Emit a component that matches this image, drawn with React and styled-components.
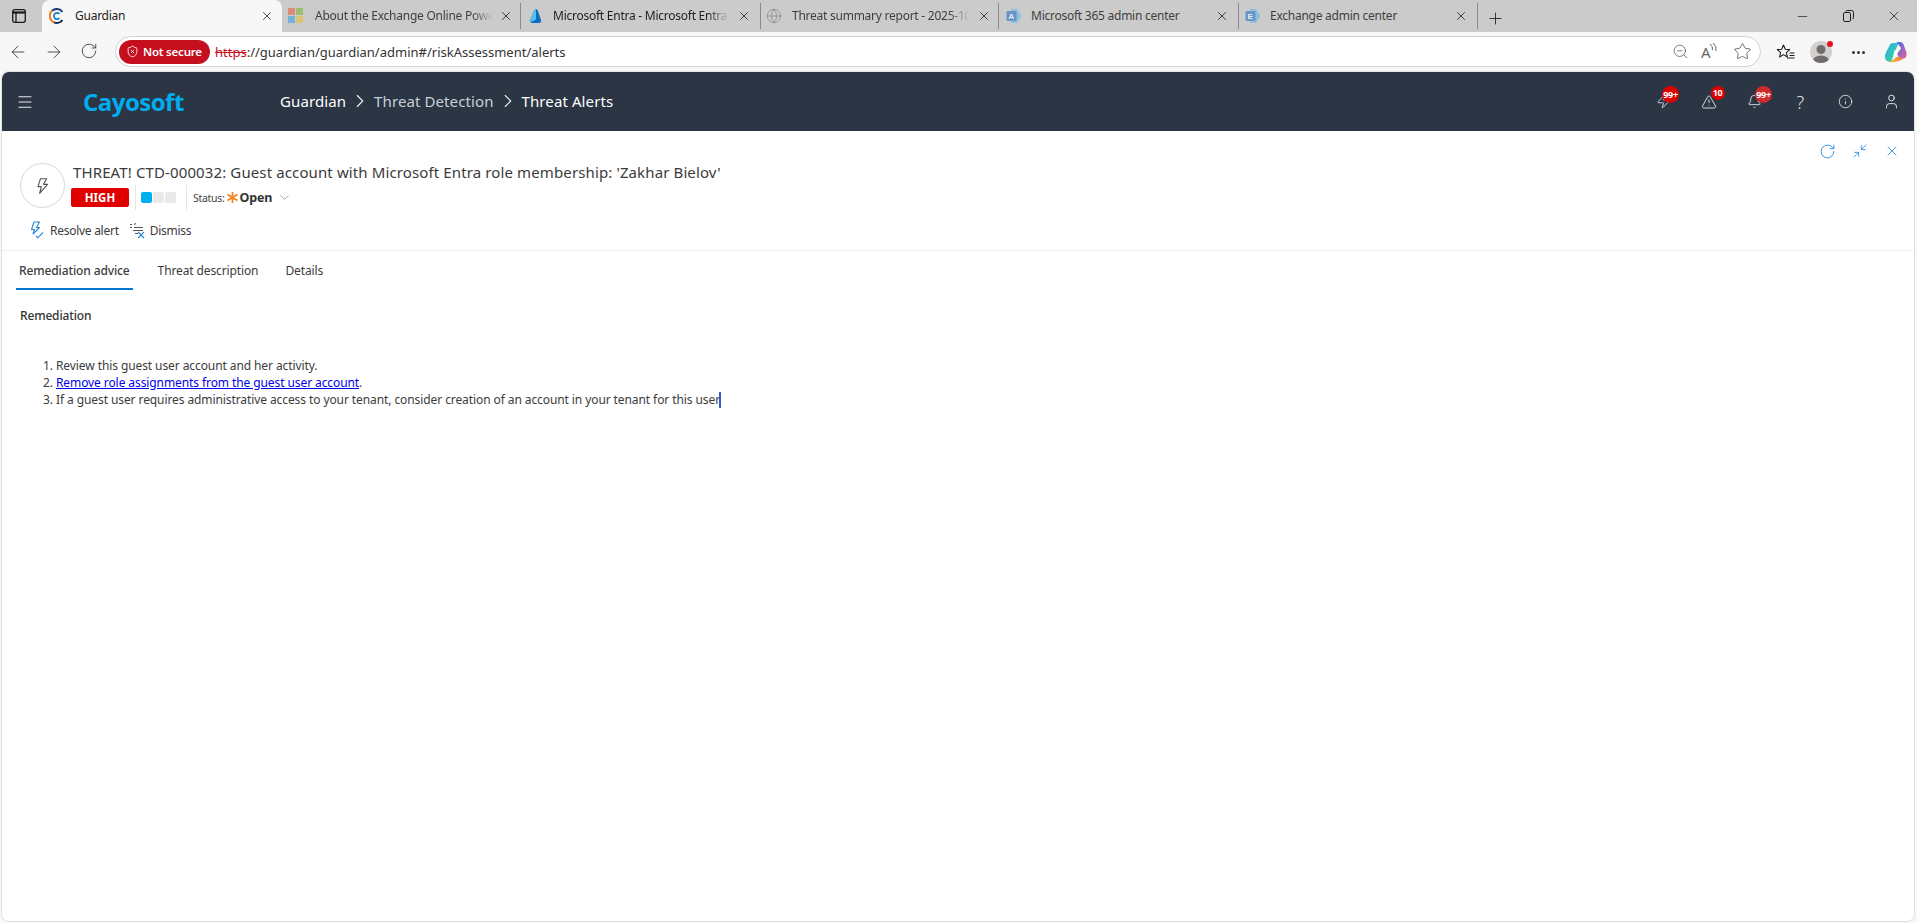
import React from "react";
import styled, { createGlobalStyle } from "styled-components";
import { ArrowLeft, ArrowRight, RotateCw, ZoomOut, Star, Menu, ChevronRight, ChevronDown, Zap, TriangleAlert, Bell, Info, User, X, Plus, Minus, ShieldX, Minimize2, Globe } from "lucide-react";

const UI = `"Noto Sans", "Open Sans", "Liberation Sans", sans-serif`;

const Global = createGlobalStyle`
  html, body { margin: 0; padding: 0; height: 100%; background: #f7f7f7; overflow: hidden; }
  body { font-family: ${UI}; }
  * { box-sizing: border-box; }
`;

const Page = styled.div`
  width: 1917px;
  height: 923px;
  display: flex;
  flex-direction: column;
  background: #f7f7f7;
`;

/* ---------- tab strip ---------- */
const TabStrip = styled.div`
  height: 32px;
  background: #cbcbcb;
  display: flex;
  align-items: flex-end;
  flex: none;
`;
const SideButton = styled.div`
  width: 42px;
  height: 32px;
  display: flex;
  align-items: center;
  justify-content: center;
  padding-right: 5px;
`;
const Tab = styled.div`
  width: ${p => p.$w}px;
  height: ${p => (p.$active ? 32 : 26)}px;
  margin-bottom: ${p => (p.$active ? 0 : 3)}px;
  padding-left: ${p => p.$pad}px;
  background: ${p => (p.$active ? "#f7f7f7" : "transparent")};
  border-radius: ${p => (p.$active ? "8px 8px 0 0" : "0")};
  border-right: ${p => (p.$active ? "none" : "1px solid #8a8a8a")};
  display: flex;
  align-items: center;
  flex: none;
`;
const TabIcon = styled.span`
  width: 16px;
  height: 16px;
  flex: none;
  display: flex;
  opacity: ${p => (p.$dim ? 0.7 : 1)};
`;
const TabTitle = styled.span`
  margin-left: ${p => p.$gap}px;
  width: ${p => p.$w}px;
  font-size: 12px;
  letter-spacing: -0.25px;
  line-height: 16px;
  color: ${p => (p.$dark ? "#1e1e1e" : "#3f3f3f")};
  white-space: nowrap;
  overflow: hidden;
  flex: none;
  ${p => p.$fade && `-webkit-mask-image: linear-gradient(90deg,#000 88%,transparent);`}
`;
const TabClose = styled.span`
  margin-left: ${p => p.$gap}px;
  display: flex;
  color: #111;
`;
const NewTab = styled.div`
  margin: 0 0 4px 8px;
  display: flex;
  color: #222;
`;
const WindowButtons = styled.div`
  margin-left: auto;
  height: 32px;
  display: flex;
  align-items: center;
  color: #1c1c1c;
`;
const WindowButton = styled.span`
  width: 46px;
  display: flex;
  justify-content: center;
`;

/* ---------- toolbar ---------- */
const Toolbar = styled.div`
  height: 40px;
  flex: none;
  display: flex;
  align-items: center;
  background: #f7f7f7;
  padding-left: 8px;
  color: #444;
`;
const NavIcons = styled.div`
  display: flex;
  gap: 16px;
  margin-right: 17px;
  color: #3f3f3f;
`;
const Omnibox = styled.div`
  width: 1646px;
  height: 31px;
  margin-top: -1px;
  border: 1px solid #d2d2d2;
  border-radius: 16px;
  background: #fff;
  display: flex;
  align-items: center;
  padding: 0 8px 0 3px;
`;
const NotSecure = styled.div`
  width: 91px;
  height: 24px;
  border-radius: 12px;
  background: #c50f1f;
  color: #fff;
  font-size: 11.5px;
  font-weight: 600;
  letter-spacing: -0.2px;
  display: flex;
  align-items: center;
  gap: 4px;
  padding-left: 7px;
  white-space: nowrap;
`;
const Url = styled.div`
  margin-left: 5px;
  font-size: 13px;
  color: #333;
  white-space: nowrap;
`;
const Https = styled.span`
  color: #c50f1f;
  text-decoration: line-through;
`;
const OmniIcons = styled.div`
  margin-left: auto;
  display: flex;
  align-items: center;
  gap: 12px;
  color: #5c5c5c;
`;
const ReadAloud = styled.span`
  width: 20px;
  height: 18px;
  display: flex;
  align-items: flex-end;
  font-size: 15px;
  line-height: 17px;
  color: #666;
`;
const ToolIcons = styled.div`
  display: flex;
  align-items: center;
  margin-left: 15px;
  gap: 15px;
  color: #333;
`;
const Avatar = styled.div`
  position: relative;
  width: 22px;
  height: 22px;
  border-radius: 50%;
  background: #d2d0ce;
  display: flex;
  align-items: flex-end;
  justify-content: center;
`;
const AvatarDot = styled.span`
  position: absolute;
  top: 0;
  right: -1px;
  width: 6px;
  height: 6px;
  border-radius: 50%;
  background: #e81123;
`;
const Dots = styled.span`
  width: 22px;
  display: flex;
  justify-content: center;
  gap: 2px;
`;
const Dot = styled.span`
  width: 3px;
  height: 3px;
  border-radius: 50%;
  background: #333;
`;

/* ---------- app frame ---------- */
const Frame = styled.div`
  flex: 1;
  margin: 0 3px 2px 2px;
  background: #fff;
  border-radius: 7px;
  box-shadow: 0 0 0 1px #e2e2e2;
  display: flex;
  flex-direction: column;
  overflow: hidden;
`;
const Header = styled.header`
  height: 59px;
  flex: none;
  background: #2b3544;
  display: flex;
  align-items: center;
  color: #fff;
  padding-left: 14px;
`;
const Burger = styled.div`
  width: 18px;
  display: flex;
  color: #fff;
`;
const Logo = styled.div`
  margin-left: 49px;
  width: 197px;
  font-family: "Open Sans", sans-serif;
  font-size: 24px;
  font-weight: 700;
  letter-spacing: -0.5px;
  color: #00aeef;
`;
const Crumbs = styled.nav`
  display: flex;
  align-items: center;
  margin-top: -1px;
  font-size: 15px;
  letter-spacing: 0.1px;
`;
const Crumb = styled.span`
  color: ${p => (p.$dim ? "#c9d0d9" : "#fff")};
`;
const CrumbSep = styled.span`
  display: flex;
  width: 28px;
  justify-content: center;
  color: #f0f0f0;
`;
const HeaderIcons = styled.div`
  margin-left: auto;
  display: flex;
  align-items: center;
`;
const HeaderIcon = styled.div`
  position: relative;
  width: 45.5px;
  display: flex;
  justify-content: center;
  color: #eef3f8;
`;
const Question = styled.span`
  font-family: "Open Sans", sans-serif;
  font-size: 18px;
  line-height: 18px;
  font-weight: 300;
  color: #eef3f8;
`;
const Badge = styled.span`
  position: absolute;
  top: -8px;
  left: ${p => p.$left}px;
  width: ${p => p.$size}px;
  height: ${p => p.$size}px;
  border-radius: 50%;
  background: ${p => p.$bg || "#dc0000"};
  color: #fff;
  font-size: 9px;
  font-weight: 700;
  letter-spacing: -0.3px;
  display: flex;
  align-items: center;
  justify-content: center;
  white-space: nowrap;
`;

/* ---------- alert panel ---------- */
const Panel = styled.main`
  flex: 1;
  display: flex;
  flex-direction: column;
  position: relative;
`;
const PanelTools = styled.div`
  position: absolute;
  top: 12px;
  right: 14px;
  display: flex;
  gap: 16px;
  color: #2f8fdf;
`;
const AlertHead = styled.section`
  display: flex;
  padding: 32px 0 0 18px;
  gap: 8px;
  height: 89px;
  flex: none;
`;
const Round = styled.div`
  width: 45px;
  height: 45px;
  border: 1px solid #d8d8d8;
  border-radius: 50%;
  display: flex;
  align-items: center;
  justify-content: center;
  color: #555;
  flex: none;
`;
const HeadText = styled.div`
  display: flex;
  flex-direction: column;
`;
const Title = styled.h1`
  margin: -1px 0 0;
  font-size: 15px;
  line-height: 20px;
  font-weight: 400;
  letter-spacing: 0.12px;
  color: #3b3b3b;
  white-space: nowrap;
`;
const MetaRow = styled.div`
  display: flex;
  align-items: center;
  height: 25px;
  margin: 3px 0 0 -2px;
`;
const Severity = styled.span`
  width: 58px;
  height: 19px;
  background: #e00000;
  color: #fff;
  border-radius: 2px;
  font-size: 11.5px;
  font-weight: 700;
  display: flex;
  align-items: center;
  justify-content: center;
`;
const MetaDivider = styled.span`
  width: 1px;
  height: 25px;
  background: #e6e6e6;
  margin: 0 ${p => p.$r}px 0 ${p => p.$l}px;
`;
const Levels = styled.div`
  display: flex;
  gap: 1px;
`;
const Level = styled.span`
  width: 11px;
  height: 11px;
  border-radius: 2px;
  background: ${p => (p.$on ? "#00aff0" : "#e9e9e9")};
`;
const StatusLabel = styled.span`
  font-size: 10.5px;
  letter-spacing: -0.3px;
  margin-left: 1px;
  color: #444;
`;
const StatusValue = styled.span`
  font-size: 12.5px;
  font-weight: 700;
  letter-spacing: -0.15px;
  color: #333;
`;
const StatusIcon = styled.span`
  display: flex;
  margin-left: 2px;
  color: #f58220;
`;
const StatusChevron = styled.span`
  display: flex;
  margin-left: 5px;
  color: #777;
`;
const Actions = styled.div`
  height: 31px;
  flex: none;
  display: flex;
  align-items: flex-start;
  padding: 1px 0 0 27px;
  border-bottom: 1px solid #eeeeee;
`;
const Action = styled.button`
  display: flex;
  align-items: center;
  border: 0;
  background: none;
  padding: 0;
  height: 18px;
  margin-right: ${p => p.$mr}px;
  font: 400 12px ${UI};
  letter-spacing: -0.27px;
  color: #3c3c3c;
  gap: ${p => p.$gap}px;
`;
const TabsRow = styled.div`
  height: 39px;
  flex: none;
  display: flex;
  padding-left: 14px;
  gap: 27px;
`;
const PageTab = styled.div`
  padding: 0 ${p => (p.$active ? 3 : 0)}px;
  margin-right: ${p => (p.$active ? -2 : 0)}px;
  height: 39px;
  border-bottom: 2px solid ${p => (p.$active ? "#0078d4" : "transparent")};
  font-size: 12px;
  line-height: 40px;
  letter-spacing: -0.12px;
  font-weight: ${p => (p.$active ? 500 : 400)};
  color: #3c3c3c;
`;
const Body = styled.div`
  padding: 17px 0 0 18px;
  font-size: 12px;
  letter-spacing: -0.09px;
  color: #3c3c3c;
`;
const SectionTitle = styled.h2`
  margin: 0 0 32px;
  font-size: 12px;
  line-height: 18px;
  letter-spacing: -0.15px;
  font-weight: 500;
  color: #333;
`;
const Steps = styled.ol`
  margin: 0;
  padding-left: 36px;
  line-height: 17px;
`;
const StepLink = styled.a`
  color: #0000ee;
  text-decoration: underline;
`;
const Caret = styled.span`
  position: relative;
  display: inline-block;
  width: 0;
`;
const CaretBar = styled.span`
  position: absolute;
  left: -1px;
  top: -12px;
  width: 2px;
  height: 16px;
  background: #2a5fd0;
`;

/* ---------- drawings ---------- */
const Bolt = ({ s = 16 }) => (
  <svg width={s} height={s} viewBox="0 0 16 16" fill="none" stroke="currentColor" strokeWidth="1">
    <path d="M9.5 1.5H5.8L3.5 8.5h3L5 14.5l7-8H8.5l2.7-5z" strokeLinejoin="round" />
  </svg>
);
const ResolveIcon = () => (
  <svg width="16" height="18" viewBox="0 0 16 18" fill="none" stroke="#2b88d8" strokeWidth="1.1" style={{ flex: "none" }}>
    <path d="M8.5 1H5L2.5 8.5h3L4 13l6.5-6.5H7.5L10.5 1z" strokeLinejoin="round" />
    <path d="M7 15l1.8 1.8L14 11.5" />
  </svg>
);
const DismissIcon = () => (
  <svg width="17" height="18" viewBox="0 0 17 18" fill="none" strokeWidth="1.1" style={{ flex: "none" }}>
    <path d="M1 3.5h2M5 3.5l2-1M1 6.5h2M5 6.5h9M4 9.5h10M6 12.5h3" stroke="#555" />
    <path d="M9 11l6 6M15 11l-6 6" stroke="#2b88d8" />
  </svg>
);
const CayoFavicon = () => (
  <svg width="16" height="16" viewBox="0 0 16 16" fill="none">
    <path d="M13.5 4A7 7 0 0 0 3 2.8" stroke="#1c3f7c" strokeWidth="2" />
    <path d="M3 2.8A7 7 0 0 0 5 14.3" stroke="#f07f22" strokeWidth="2" />
    <path d="M5 14.3A7 7 0 0 0 13.5 12" stroke="#12294f" strokeWidth="2" />
    <path d="M10.5 5.8A3.2 3.2 0 1 0 10.5 10.2" stroke="#1784c7" strokeWidth="1.8" />
  </svg>
);
const MsFavicon = () => (
  <svg width="15" height="15" viewBox="0 0 15 15">
    <rect width="7" height="7" fill="#e8705a" />
    <rect x="8" width="7" height="7" fill="#8ab84a" />
    <rect y="8" width="7" height="7" fill="#4ea8e0" />
    <rect x="8" y="8" width="7" height="7" fill="#e8c24a" />
  </svg>
);
const EntraFavicon = () => (
  <svg width="16" height="16" viewBox="0 0 16 16">
    <path d="M8 1Q9.5 1 10.5 4.5L13 12q.5 2.5-2 3H4q-2.5-.5-1.5-3.5L5.5 4Q6.5 1 8 1z" fill="#0f6cc4" />
    <path d="M8 1Q6.5 1 5.5 4L2.5 11.5Q2 13 3 14l5-2.5z" fill="#4fc3ee" />
  </svg>
);
const AdminFavicon = ({ letter }) => (
  <svg width="16" height="16" viewBox="0 0 16 16">
    <path d="M5 1h6l4.5 7-4.5 7H5z" fill="#74bce8" />
    <rect x="0.5" y="3" width="10" height="10" rx="1" fill="#3f7fc4" />
    <text x="5.5" y="10.8" fontSize="8" fontFamily="Liberation Sans" fontWeight="700" fill="#fff" textAnchor="middle">{letter}</text>
  </svg>
);
const SidebarGlyph = () => (
  <svg width="14" height="14" viewBox="0 0 14 14" fill="none" stroke="#1a1a1a" strokeWidth="1.3">
    <rect x="0.7" y="0.7" width="12.6" height="12.6" rx="2" />
    <path d="M0.7 3.5h12.6" strokeWidth="2.2" />
    <path d="M4 3.5v9.5" />
  </svg>
);
const RestoreGlyph = () => (
  <svg width="11" height="12" viewBox="0 0 11 12" fill="none" stroke="#1c1c1c" strokeWidth="1">
    <rect x="0.5" y="2.5" width="7" height="9" rx="1.4" />
    <path d="M3 1.5Q3 .5 4.2 .5H8.5Q10.5 .5 10.5 2.5V7.5Q10.5 9 9.5 9" />
  </svg>
);
const FavList = () => (
  <svg width="19" height="19" viewBox="0 0 19 19" fill="none" stroke="#1c1c1c" strokeWidth="1.1">
    <path d="M7.5 2l1.8 4.2 4.4.4-3.3 3 1 4.4-3.9-2.4-3.9 2.4 1-4.4-3.3-3 4.4-.4z" strokeLinejoin="round" />
    <path d="M13.5 10h5M13.5 12.5h5M11 15h7.5" />
  </svg>
);
const AvatarGlyph = () => (
  <svg width="22" height="22" viewBox="0 0 22 22" style={{ borderRadius: "50%" }}>
    <circle cx="11" cy="8.5" r="4.5" fill="#6f6c6a" />
    <ellipse cx="11" cy="20" rx="8" ry="5.5" fill="#6f6c6a" />
  </svg>
);
const Waves = () => (
  <svg width="8" height="12" viewBox="0 0 8 12" fill="none" stroke="#666" strokeWidth="1" style={{ marginLeft: -2, marginBottom: 6 }}>
    <path d="M1 1q3 2 2.5 6M4 0q4 3 3 8" />
  </svg>
);
const Copilot = () => (
  <svg width="23" height="23" viewBox="0 0 22 22">
    <defs>
      <linearGradient id="cpA" x1="0" y1="0" x2="1" y2="1">
        <stop offset="0" stopColor="#2ea8f0" />
        <stop offset="1" stopColor="#3ddc84" />
      </linearGradient>
      <linearGradient id="cpB" x1="0" y1="0" x2="1" y2="1">
        <stop offset="0" stopColor="#3b6df0" />
        <stop offset="1" stopColor="#f0609a" />
      </linearGradient>
      <linearGradient id="cpC" x1="0" y1="0" x2="1" y2="0">
        <stop offset="0" stopColor="#f5c542" />
        <stop offset="1" stopColor="#f07a3c" />
      </linearGradient>
    </defs>
    <path d="M5 5Q6 2 9 2h5l-4 9-3 9Q2 20 1 16.5q-.5-3 1-6z" fill="url(#cpA)" />
    <path d="M12 1h3q3 0 4 3l2.5 7q.8 5-3 6h-4l-2-5 4-5z" fill="url(#cpB)" />
    <path d="M5 20q4 1 10-1 3-1 3-3l-6-1-3 3z" fill="url(#cpC)" />
    <path d="M10 9h4l-2 5h-3z" fill="#fff" />
  </svg>
);

const tabs = [
  { title: "About the Exchange Online PowerShell", w: 239, pad: 6, gap: 11, tw: 178, close: 6, icon: <MsFavicon />, fade: true },
  { title: "Microsoft Entra - Microsoft Entra admin", w: 240, pad: 7, gap: 9, tw: 176, close: 8, icon: <EntraFavicon />, fade: true, dark: true },
  { title: "Threat summary report - 2025-10-21", w: 238, pad: 5, gap: 10, tw: 178, close: 7, icon: <Globe size={16} strokeWidth={0.9} color="#555" />, fade: true },
  { title: "Microsoft 365 admin center", w: 240, pad: 7, gap: 9, tw: 176, close: 8, icon: <AdminFavicon letter="A" /> },
  { title: "Exchange admin center", w: 239, pad: 6, gap: 9, tw: 176, close: 8, icon: <AdminFavicon letter="E" /> },
];

export default function App() {
  return (
    <Page>
      <Global />
      <TabStrip>
        <SideButton><SidebarGlyph /></SideButton>
        <Tab $active $w={240} $pad={7}>
          <TabIcon><CayoFavicon /></TabIcon>
          <TabTitle $gap={10} $w={184} $dark>Guardian</TabTitle>
          <TabClose $gap={1}><X size={14} strokeWidth={1.3} /></TabClose>
        </Tab>
        {tabs.map(t => (
          <Tab key={t.title} $w={t.w} $pad={t.pad}>
            <TabIcon $dim={!t.dark}>{t.icon}</TabIcon>
            <TabTitle $gap={t.gap} $w={t.tw} $fade={t.fade} $dark={t.dark}>{t.title}</TabTitle>
            <TabClose $gap={t.close}><X size={14} strokeWidth={1.3} /></TabClose>
          </Tab>
        ))}
        <NewTab><Plus size={19} strokeWidth={1.1} /></NewTab>
        <WindowButtons>
          <WindowButton><Minus size={15} strokeWidth={1.1} /></WindowButton>
          <WindowButton><RestoreGlyph /></WindowButton>
          <WindowButton><X size={16} strokeWidth={1.1} /></WindowButton>
        </WindowButtons>
      </TabStrip>

      <Toolbar>
        <NavIcons>
          <ArrowLeft size={20} strokeWidth={1.1} />
          <ArrowRight size={20} strokeWidth={1.1} />
          <RotateCw size={18} strokeWidth={1.2} />
        </NavIcons>
        <Omnibox>
          <NotSecure><ShieldX size={13} strokeWidth={1.5} />Not secure</NotSecure>
          <Url><Https>https</Https>://guardian/guardian/admin#/riskAssessment/alerts</Url>
          <OmniIcons>
            <ZoomOut size={17} strokeWidth={1.1} />
            <ReadAloud>A<Waves /></ReadAloud>
            <Star size={19} strokeWidth={1.1} />
          </OmniIcons>
        </Omnibox>
        <ToolIcons>
          <FavList />
          <Avatar><AvatarGlyph /><AvatarDot /></Avatar>
          <Dots><Dot /><Dot /><Dot /></Dots>
          <Copilot />
        </ToolIcons>
      </Toolbar>

      <Frame>
        <Header>
          <Burger><Menu size={18} strokeWidth={1.2} /></Burger>
          <Logo>Cayosoft</Logo>
          <Crumbs>
            <Crumb>Guardian</Crumb>
            <CrumbSep><ChevronRight size={22} strokeWidth={1.2} /></CrumbSep>
            <Crumb $dim>Threat Detection</Crumb>
            <CrumbSep><ChevronRight size={22} strokeWidth={1.2} /></CrumbSep>
            <Crumb>Threat Alerts</Crumb>
          </Crumbs>
          <HeaderIcons>
            <HeaderIcon>
              <Zap size={15} strokeWidth={1.3} />
              <Badge $left={21} $size={17}>99+</Badge>
            </HeaderIcon>
            <HeaderIcon>
              <TriangleAlert size={16} strokeWidth={1.3} />
              <Badge $left={24} $size={14}>10</Badge>
            </HeaderIcon>
            <HeaderIcon>
              <Bell size={15} strokeWidth={1.3} />
              <Badge $left={23} $size={17} $bg="#cf2a2a">99+</Badge>
            </HeaderIcon>
            <HeaderIcon><Question>?</Question></HeaderIcon>
            <HeaderIcon><Info size={15} strokeWidth={1.3} /></HeaderIcon>
            <HeaderIcon><User size={17} strokeWidth={1.3} /></HeaderIcon>
          </HeaderIcons>
        </Header>

        <Panel>
          <PanelTools>
            <RotateCw size={17} strokeWidth={1.3} />
            <Minimize2 size={16} strokeWidth={1.3} />
            <X size={16} strokeWidth={1.3} />
          </PanelTools>
          <AlertHead>
            <Round><Bolt s={18} /></Round>
            <HeadText>
              <Title>THREAT! CTD-000032: Guest account with Microsoft Entra role membership: 'Zakhar Bielov'</Title>
              <MetaRow>
                <Severity>HIGH</Severity>
                <MetaDivider $l={6} $r={5} />
                <Levels><Level $on /><Level /><Level /></Levels>
                <MetaDivider $l={10} $r={5} />
                <StatusLabel>Status:</StatusLabel>
                <StatusIcon>
                  <svg width="13" height="13" viewBox="0 0 13 13" stroke="currentColor" strokeWidth="1.8">
                    <path d="M6.5 1v11M1.5 3.5l10 6M11.5 3.5l-10 6" />
                  </svg>
                </StatusIcon>
                <StatusValue>Open</StatusValue>
                <StatusChevron><ChevronDown size={15} strokeWidth={1} /></StatusChevron>
              </MetaRow>
            </HeadText>
          </AlertHead>
          <Actions>
            <Action $gap={5} $mr={10}><ResolveIcon />Resolve alert</Action>
            <Action $gap={4}><DismissIcon />Dismiss</Action>
          </Actions>
          <TabsRow>
            <PageTab $active>Remediation advice</PageTab>
            <PageTab>Threat description</PageTab>
            <PageTab>Details</PageTab>
          </TabsRow>
          <Body>
            <SectionTitle>Remediation</SectionTitle>
            <Steps>
              <li>Review this guest user account and her activity.</li>
              <li><StepLink href="#">Remove role assignments from the guest user account</StepLink>.</li>
              <li>If a guest user requires administrative access to your tenant, consider creation of an account in your tenant for this user<Caret><CaretBar /></Caret></li>
            </Steps>
          </Body>
        </Panel>
      </Frame>
    </Page>
  );
}
